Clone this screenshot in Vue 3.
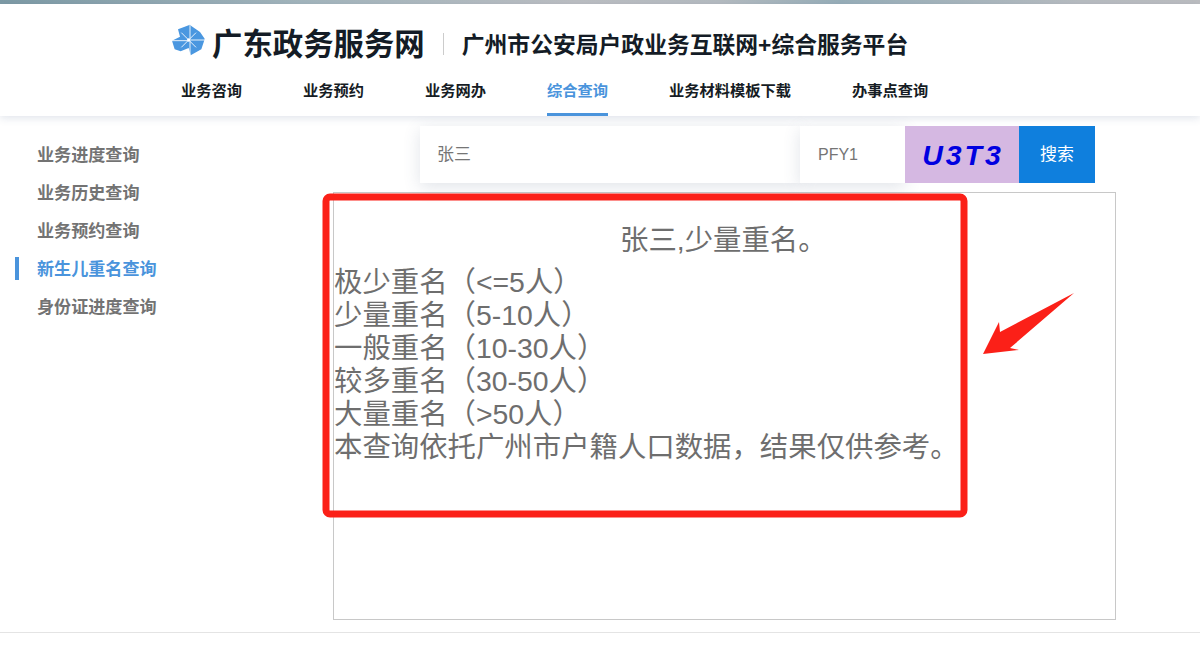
<script setup>
const nav = ['业务咨询', '业务预约', '业务网办', '综合查询', '业务材料模板下载', '办事点查询']
const side = ['业务进度查询', '业务历史查询', '业务预约查询', '新生儿重名查询', '身份证进度查询']
const levels = [
  '极少重名\uFF08<=5人\uFF09',
  '少量重名\uFF085-10人\uFF09',
  '一般重名\uFF0810-30人\uFF09',
  '较多重名\uFF0830-50人\uFF09',
  '大量重名\uFF08>50人\uFF09',
  '本查询依托广州市户籍人口数据\uFF0C结果仅供参考。',
]
</script>

<template>
  <div class="page">
    <div class="topband"></div>
    <header class="header">
      <div class="brand">
        <svg class="logo" viewBox="0 0 108 108" width="36" height="36" aria-hidden="true">
          <polygon points="60,8 64,12 90,30 104,50 102,58 94,82 62,100 56,78 32,88 14,82 6,56 30,44 24,22" fill="#4a97e0" />
          <g stroke="#fff" stroke-width="2.6">
            <line x1="34" y1="32" x2="78" y2="76" />
            <line x1="78" y1="32" x2="34" y2="76" />
            <line x1="60" y1="8" x2="60" y2="50" />
            <line x1="6" y1="56" x2="52" y2="56" />
            <line x1="60" y1="58" x2="60" y2="100" />
            <line x1="60" y1="54" x2="104" y2="54" />
          </g>
          <circle cx="56" cy="54" r="5" fill="#fff" />
        </svg>
        <span class="site">广东政务服务网</span>
        <span class="divider"></span>
        <span class="platform">广州市公安局户政业务互联网+综合服务平台</span>
      </div>
      <nav class="nav">
        <a v-for="n in nav" :key="n" class="nav-item" :class="{ on: n === '综合查询' }">{{ n }}</a>
      </nav>
    </header>

    <div class="body">
      <aside class="side">
        <a v-for="s in side" :key="s" class="side-item" :class="{ on: s === '新生儿重名查询' }">{{ s }}</a>
      </aside>
      <main class="main">
        <div class="search">
          <div class="field name">张三</div>
          <div class="field code">PFY1</div>
          <div class="captcha">U3T3</div>
          <div class="btn">搜索</div>
        </div>
        <section class="result">
          <div class="headline">张三,少量重名。</div>
          <div v-for="l in levels" :key="l" class="line">{{ l }}</div>
        </section>
      </main>
    </div>
    <div class="foot"></div>

    <svg class="markup" width="1200" height="647" aria-hidden="true">
      <rect x="326" y="197" width="638" height="317" rx="4" fill="none" stroke="#fb2018" stroke-width="7" />
      <polygon points="983,354 999,322 1000,332 1074,293 1010,348 1019,350" fill="#fb2018" />
    </svg>
  </div>
</template>

<style>
html, body { margin: 0; background: #fff; overflow: hidden; }
</style>

<style scoped>
.page {
  position: relative;
  width: 1200px;
  height: 647px;
  overflow: hidden;
  background: #fff;
  font-family: "Liberation Sans", "Noto Sans CJK SC", sans-serif;
}
.topband {
  height: 4px;
  background: linear-gradient(90deg, #7d9aa5 0%, #a3b5bc 25%, #bcbec2 48%, #b5bbc0 60%, #97aeb8 70%, #b8bcc0 90%, #bcbdc0 100%);
}
.header {
  height: 112px;
  box-sizing: border-box;
  padding-left: 172px;
  background: #fff;
  box-shadow: 0 2px 8px rgba(60, 90, 130, 0.16);
  position: relative;
}
.brand {
  display: flex;
  align-items: center;
  padding-top: 20px;
  box-sizing: border-box;
  height: 60px;
  color: #141c26;
  font-weight: 700;
}
.logo { flex: none; margin: 0 6px 8px -2px; }
.site { font-size: 30.4px; line-height: 40px; }
.divider { width: 1px; height: 22px; background: #ccc; margin: 0 18px; }
.platform { font-size: 22.8px; line-height: 40px; padding-top: 2px; }
.nav {
  display: flex;
  gap: 61px;
  padding-left: 9px;
}
.nav-item {
  display: block;
  height: 52px;
  box-sizing: border-box;
  font-size: 15.25px;
  font-weight: 700;
  line-height: 53px;
  color: #161c24;
}
.nav-item.on { color: #4a94dc; border-bottom: 3px solid #4a94dc; }
.body { display: flex; height: 516px; }
.side {
  width: 333px;
  flex: none;
  padding-top: 27px;
  box-sizing: border-box;
  display: flex;
  flex-direction: column;
  gap: 15px;
}
.side-item {
  display: block;
  height: 23px;
  line-height: 26px;
  padding-left: 18px;
  margin-left: 15px;
  border-left: 4px solid transparent;
  font-size: 17.1px;
  font-weight: 700;
  color: #737373;
}
.side-item.on { color: #4a94dc; border-left-color: #4a94dc; }
.search {
  display: flex;
  height: 57px;
  margin: 10px 0 9px 87px;
}
.field {
  background: #fff;
  box-shadow: 0 4px 16px rgba(70, 90, 120, 0.16);
  font-size: 16px;
  line-height: 57px;
  color: #757575;
  box-sizing: border-box;
}
.name { width: 380px; padding-left: 17px; font-size: 17px; }
.code { width: 105px; padding-left: 18px; }
.captcha {
  width: 114px;
  box-sizing: border-box;
  padding-left: 2px;
  background: #d5b8e2;
  color: #0000e0;
  font-size: 28.5px;
  font-weight: 700;
  font-style: italic;
  letter-spacing: 3px;
  line-height: 58px;
  text-align: center;
  position: relative;
}
.btn {
  width: 76px;
  background: #0f7fdd;
  color: #fff;
  font-size: 17px;
  line-height: 57px;
  text-align: center;
  position: relative;
}
.result {
  width: 783px;
  height: 428px;
  box-sizing: border-box;
  border: 1px solid #c8c8c8;
  padding-top: 31px;
  color: #6e6e6e;
  font-size: 28.4px;
  line-height: 33px;
}
.headline { padding-left: 286px; margin-bottom: 9px; white-space: nowrap; }
.line { white-space: nowrap; }
.foot { border-top: 1px solid #e4e4e4; }
.markup { position: absolute; left: 0; top: 0; pointer-events: none; }
</style>
